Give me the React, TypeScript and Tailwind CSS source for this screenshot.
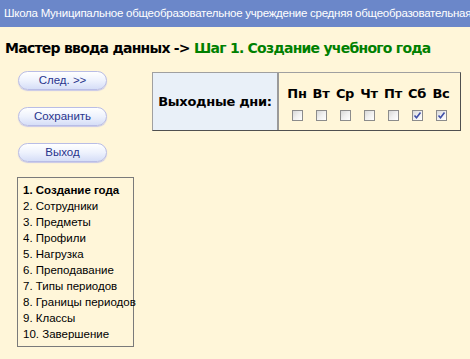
import React from "react"

const days = [
  { name: "Пн", on: false },
  { name: "Вт", on: false },
  { name: "Ср", on: false },
  { name: "Чт", on: false },
  { name: "Пт", on: false },
  { name: "Сб", on: true },
  { name: "Вс", on: true },
]

const steps = [
  "1. Создание года",
  "2. Сотрудники",
  "3. Предметы",
  "4. Профили",
  "5. Нагрузка",
  "6. Преподавание",
  "7. Типы периодов",
  "8. Границы периодов",
  "9. Классы",
  "10. Завершение",
]

function PillButton({ title }: { title: string }) {
  return (
    <div className="flex h-[19px] w-[89px] items-center justify-center rounded-full border border-[#b9bde6] bg-gradient-to-b from-[#ffffff] via-[#eef2fd] to-[#d6def7] text-[11.5px] text-[#28348c] shadow-[0_1px_1px_#c8c8e8] cursor-pointer">
      {title}
    </div>
  )
}

function Check({ on }: { on: boolean }) {
  return (
    <div className="flex h-[11px] w-[11px] items-center justify-center border border-[#8c8c8c] bg-gradient-to-br from-[#d8d8d8] via-[#f0f0f0] to-[#ffffff]">
      {on && (
        <svg width="9" height="9" viewBox="0 0 9 9">
          <path d="M1.5 4.5 L3.5 6.8 L7.5 1.5" fill="none" stroke="#3f4fa8" strokeWidth="1.6" />
        </svg>
      )}
    </div>
  )
}

export default function App() {
  return (
    <div className="h-[359px] w-[470px] overflow-hidden bg-[#fff6d9] font-['Liberation_Sans',Arial,sans-serif]">
      <div className="flex h-[27px] items-center overflow-hidden whitespace-nowrap bg-[#6b87c9] pl-[4px] text-[11.5px] tracking-[-0.25px] text-white">
        Школа Муниципальное общеобразовательное учреждение средняя общеобразовательная
      </div>
      <div className="mt-[11px] whitespace-nowrap pl-[5px] font-['DejaVu_Sans',Verdana,sans-serif] text-[14px] font-bold leading-[20px] tracking-[-0.75px]">
        <span className="text-black">Мастер ввода данных -&gt; </span>
        <span className="text-[#008000]">Шаг 1. Создание учебного года</span>
      </div>
      <div className="mt-[13px] flex">
        <div className="ml-[18px] flex flex-col">
          <div className="flex flex-col gap-[17px]">
            <PillButton title="След. >>" />
            <PillButton title="Сохранить" />
            <PillButton title="Выход" />
          </div>
          <div className="mt-[15px] ml-[-1px] w-[117px] whitespace-nowrap border border-[#7a7a7a] px-[5px] py-[4px] text-[11.5px] leading-[16px] text-black">
            {steps.map((s, i) => (
              <div key={s} className={i === 0 ? "font-bold" : ""}>
                {s}
              </div>
            ))}
          </div>
        </div>
        <div className="ml-[18px] mt-[1px] flex h-[59px] w-[309px] border border-t-[#a0a0a0] border-l-[#a0a0a0] border-b-[#505050] border-r-[#505050]">
          <div className="flex w-[126px] items-center justify-center border-r-2 border-r-[#9a9a9a] bg-[#e9f0f8] font-['DejaVu_Sans',Verdana,sans-serif] text-[13px] font-bold tracking-[-0.3px]">
            Выходные дни:
          </div>
          <div className="flex flex-1 items-start pl-[6px] pt-[14px]">
            {days.map((d) => (
              <div key={d.name} className="flex w-[24px] flex-col items-center gap-[10px]">
                <span className="font-['DejaVu_Sans',Verdana,sans-serif] text-[13px] font-bold leading-[13px] tracking-[-0.3px]">
                  {d.name}
                </span>
                <Check on={d.on} />
              </div>
            ))}
          </div>
        </div>
      </div>
    </div>
  )
}
